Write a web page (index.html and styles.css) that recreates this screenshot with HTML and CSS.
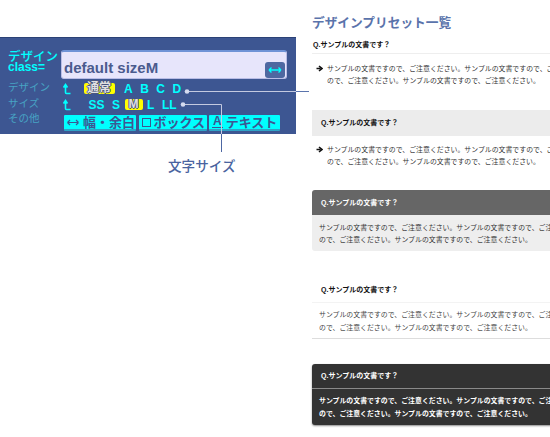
FILE: index.html
```html
<!DOCTYPE html>
<html lang="ja">
<head>
<meta charset="utf-8">
<title>デザインプリセット</title>
<link rel="stylesheet" href="styles.css">
</head>
<body>
<div class="page">
  <section class="left">
    <div class="panel">
      <div class="panel-top">
        <div class="cls-label"><span class="cls-jp">デザイン</span><span class="cls-en">class=</span></div>
        <div class="input">
          <span class="input-text">default sizeM</span>
          <span class="input-btn"><svg width="14" height="8" viewBox="0 0 14 8"><path d="M1 4H13M1 4L3.5 1.5M1 4L3.5 6.5M13 4L10.5 1.5M13 4L10.5 6.5" fill="none" stroke="#00ffff" stroke-width="1.4"/></svg></span>
        </div>
      </div>
      <div class="panel-body">
        <div class="side-labels"><span>デザイン</span><span>サイズ</span><span>その他</span></div>
        <div class="opts">
          <div class="opt-row">
            <svg class="hook" width="8" height="12" viewBox="0 0 8 12"><path d="M2.5 1.5V9.5Q2.5 10.5 3.5 10.5H7.5M0.5 4.5L2.5 1.5L4.5 4.5" fill="none" stroke="#00ffff" stroke-width="1.6"/></svg>
            <span class="chip on first">通常</span><span class="chip">A</span><span class="chip">B</span><span class="chip">C</span><span class="chip">D</span>
          </div>
          <div class="opt-row">
            <svg class="hook" width="8" height="12" viewBox="0 0 8 12"><path d="M2.5 1.5V9.5Q2.5 10.5 3.5 10.5H7.5M0.5 4.5L2.5 1.5L4.5 4.5" fill="none" stroke="#00ffff" stroke-width="1.6"/></svg>
            <span class="chip second">SS</span><span class="chip">S</span><span class="chip on">M</span><span class="chip">L</span><span class="chip">LL</span>
          </div>
          <div class="btns">
            <span class="btn b1"><svg width="12" height="7" viewBox="0 0 12 7"><path d="M0.5 3.5H11.5M0.5 3.5L3 1M0.5 3.5L3 6M11.5 3.5L9 1M11.5 3.5L9 6" fill="none" stroke="#3d5692" stroke-width="1.2"/></svg>幅・余白</span>
            <span class="btn b2"><span class="sq"></span>ボックス</span>
            <span class="btn b3"><span class="ua">A</span>テキスト</span>
          </div>
        </div>
      </div>
    </div>
    <div class="callout">文字サイズ</div>
  </section>

  <section class="right">
    <h1 class="title">デザインプリセット一覧</h1>

    <div class="card c1">
      <div class="qhead">Q.サンプルの文書です？</div>
      <div class="qbody arrowed"><svg class="arr" width="7" height="7" viewBox="0 0 7 7"><path d="M0.5 3.5H4.5M3 1L6 3.5L3 6" fill="none" stroke="#111" stroke-width="1.6"/></svg><p class="qtext">サンプルの文書ですので、ご注意ください。サンプルの文書ですので、ご注意ください。サンプルの文書ですので、ご注意ください。サンプルの文書ですので、ご注意ください。</p></div>
    </div>

    <div class="card c2">
      <div class="qhead">Q.サンプルの文書です？</div>
      <div class="qbody arrowed"><svg class="arr" width="7" height="7" viewBox="0 0 7 7"><path d="M0.5 3.5H4.5M3 1L6 3.5L3 6" fill="none" stroke="#111" stroke-width="1.6"/></svg><p class="qtext">サンプルの文書ですので、ご注意ください。サンプルの文書ですので、ご注意ください。サンプルの文書ですので、ご注意ください。サンプルの文書ですので、ご注意ください。</p></div>
    </div>

    <div class="card c3">
      <div class="qhead">Q.サンプルの文書です？</div>
      <div class="qbody"><p class="qtext">サンプルの文書ですので、ご注意ください。サンプルの文書ですので、ご注意ください。サンプルの文書ですので、ご注意ください。サンプルの文書ですので、ご注意ください。</p></div>
    </div>

    <div class="card c4">
      <div class="qhead">Q.サンプルの文書です？</div>
      <div class="qbody"><p class="qtext">サンプルの文書ですので、ご注意ください。サンプルの文書ですので、ご注意ください。サンプルの文書ですので、ご注意ください。サンプルの文書ですので、ご注意ください。</p></div>
    </div>

    <div class="card c5">
      <div class="qhead">Q.サンプルの文書です？</div>
      <div class="qbody"><p class="qtext">サンプルの文書ですので、ご注意ください。サンプルの文書ですので、ご注意ください。サンプルの文書ですので、ご注意ください。サンプルの文書ですので、ご注意ください。</p></div>
    </div>
  </section>

  <svg class="connectors" width="550" height="437" viewBox="0 0 550 437">
    <path d="M187 91.5H296" stroke="#c3c9e0" stroke-width="1" fill="none"/>
    <path d="M296 91.5H309" stroke="#5b74ad" stroke-width="1" fill="none"/>
    <path d="M183 104.5H221.5V134" stroke="#c3c9e0" stroke-width="1" fill="none"/>
    <path d="M221.5 134V152" stroke="#4d67a3" stroke-width="1" fill="none"/>
    <circle cx="187" cy="91.5" r="2.3" fill="#d4daef"/>
    <circle cx="183" cy="104.5" r="2.3" fill="#d4daef"/>
  </svg>
</div>
</body>
</html>
```

FILE: styles.css
```css
* { box-sizing: border-box; margin: 0; padding: 0; }

html, body {
  width: 550px;
  height: 437px;
  overflow: hidden;
  background: #ffffff;
}

body {
  font-family: "Liberation Sans", "Noto Sans CJK JP", sans-serif;
}

.page {
  position: relative;
  display: flex;
  width: 550px;
  height: 437px;
  overflow: hidden;
}

/* ---------- left ---------- */
.left {
  flex: 0 0 312px;
  padding-top: 37px;
}

.panel {
  width: 296px;
  height: 97px;
  background: #3d5692;
  border-top: 1px solid #2b4176;
  padding: 11px 0 0 8px;
}

.panel-top {
  display: flex;
  height: 30px;
  align-items: flex-end;
}

.cls-label {
  width: 53px;
  align-self: flex-start;
  display: flex;
  flex-direction: column;
  color: #00ffff;
}

.cls-jp {
  font-family: "Noto Sans CJK JP", sans-serif;
  font-size: 12.5px;
  font-weight: 500;
  line-height: 13px;
}

.cls-en {
  font-size: 12px;
  font-weight: bold;
  line-height: 11px;
}

.input {
  width: 226px;
  height: 29px;
  background: #e7e5fb;
  border: 1px solid #b9bde6;
  border-top: 2px solid #6f93d6;
  border-radius: 3px;
  display: flex;
  align-items: center;
  padding-left: 2px;
}

.input-text {
  font-size: 15px;
  font-weight: bold;
  color: #4b5b8e;
  padding-top: 4px;
}

.input-btn {
  margin-left: auto;
  margin-right: 1px;
  align-self: flex-end;
  width: 20px;
  height: 16px;
  background: #4e68a1;
  border-radius: 3px;
  display: flex;
  align-items: center;
  justify-content: center;
}

.panel-body {
  display: flex;
}

.side-labels {
  width: 55px;
  display: flex;
  flex-direction: column;
  font-family: "Noto Sans CJK JP", sans-serif;
  font-size: 10.5px;
  line-height: 15.5px;
  color: #47a3c4;
}

.opts {
  display: flex;
  flex-direction: column;
  padding-top: 2px;
}

.opt-row {
  display: flex;
  align-items: center;
  height: 15px;
  margin-bottom: 1px;
  gap: 1.5px;
}

.hook {
  margin-right: 11px;
}

.chip {
  font-family: "Liberation Sans", "Noto Sans CJK JP", sans-serif;
  font-size: 12px;
  font-weight: bold;
  line-height: 12px;
  color: #00ffff;
  padding: 0 3px;
}

.chip.on {
  background: #ffff00;
  color: #e0e0e0;
  border-radius: 2px;
  padding: 0 4px;
  line-height: 11px;
  text-shadow: 1px 0 0 #4a5680, -1px 0 0 #4a5680, 0 1px 0 #4a5680, 0 -1px 0 #4a5680;
}

.chip.first {
  margin-right: 5px;
  padding: 0 3.5px;
}

.chip.second {
  margin-left: 2px;
}

.btns {
  display: flex;
  gap: 2.5px;
  margin-top: 2px;
  margin-left: 1px;
}

.btn {
  height: 16px;
  background: #00ffff;
  border-bottom: 2px solid #2fa3c6;
  border-radius: 1px;
  font-family: "Noto Sans CJK JP", sans-serif;
  font-size: 13px;
  font-weight: bold;
  line-height: 14px;
  color: #3d5692;
  display: flex;
  align-items: center;
  padding-left: 3px;
  gap: 4px;
}

.b1 { width: 72px; }
.b2 { width: 68px; gap: 3px; }
.b3 { width: 71px; gap: 3px; }

.sq {
  width: 9px;
  height: 9px;
  border: 1.5px solid #3d5692;
}

.ua {
  font-family: "Liberation Sans", sans-serif;
  font-size: 12px;
  line-height: 11px;
  border-bottom: 1.5px solid #3d5692;
  padding: 0 1px;
}

.callout {
  margin-top: 23px;
  padding-left: 168px;
  font-family: "Noto Sans CJK JP", sans-serif;
  font-size: 13.6px;
  font-weight: 500;
  line-height: 16px;
  color: #4a64a0;
}

/* ---------- right ---------- */
.right {
  flex: 0 0 380px;
  padding-top: 14px;
  font-family: "Noto Sans CJK JP", sans-serif;
}

.title {
  font-size: 12.7px;
  font-weight: bold;
  line-height: 15px;
  color: #5a73ab;
}

.card {
  width: 370px;
}

.qhead {
  font-family: "Liberation Sans", "Noto Sans CJK JP", sans-serif;
  font-size: 7px;
  font-weight: bold;
  color: #111;
}

.qbody {
  display: flex;
  align-items: flex-start;
}

.qtext {
  width: 340px;
  font-size: 6.9px;
  line-height: 12px;
  color: #333;
}

.arr {
  margin: 3px 4px 0 4px;
  flex: 0 0 7px;
}

/* card 1 : plain with separator */
.c1 { margin-top: 9px; }
.c1 .qhead {
  line-height: 14px;
  padding: 0 0 1px 1px;
  border-bottom: 1px solid #eeeeee;
}
.c1 .qbody { padding-top: 8px; }

/* card 2 : gray header */
.c2 { margin-top: 24px; }
.c2 .qhead {
  height: 26px;
  line-height: 26px;
  background: #ececec;
  padding-left: 9px;
}
.c2 .qbody { padding-top: 7px; }

/* card 3 : dark header, gray body */
.c3 { margin-top: 23px; }
.c3 .qhead {
  height: 25px;
  line-height: 25px;
  background: #666666;
  color: #ffffff;
  padding-left: 9px;
  border-radius: 3px 0 0 0;
}
.c3 .qbody {
  background: #eeeeee;
  padding: 6px 0 6px 7px;
  border-radius: 0 0 0 3px;
}
.c3 .qtext { color: #333; }

/* card 4 : lines */
.c4 { margin-top: 26px; border-bottom: 1px solid #dddddd; }
.c4 .qhead {
  height: 26px;
  line-height: 25px;
  padding-left: 9px;
  border-bottom: 1px solid #f3f3f3;
}
.c4 .qbody { padding: 5px 0 4px 7px; }
.c4 .qtext { line-height: 13px; color: #444; }

/* card 5 : dark */
.c5 {
  margin-top: 25px;
  background: #333333;
  border-radius: 3px;
  box-shadow: 0 1px 2px rgba(0, 0, 0, 0.45);
}
.c5 .qhead {
  height: 25px;
  line-height: 24px;
  padding-left: 9px;
  color: #ffffff;
  border-bottom: 1px solid #8a8a8a;
}
.c5 .qbody { padding: 5px 0 5px 7px; }
.c5 .qtext { line-height: 13px; color: #ffffff; font-weight: bold; }

/* ---------- connectors ---------- */
.connectors {
  position: absolute;
  top: 0;
  left: 0;
  pointer-events: none;
}
```
